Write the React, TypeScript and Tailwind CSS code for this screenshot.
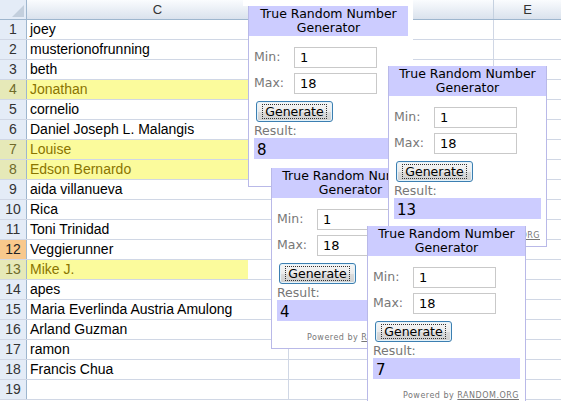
import React from 'react';

// Sheet rows: [row number, name, highlighted]
const rows: [number, string, boolean][] = [
  [1, 'joey', false],
  [2, 'musterionofrunning', false],
  [3, 'beth', false],
  [4, 'Jonathan', true],
  [5, 'cornelio', false],
  [6, 'Daniel Joseph L. Malangis', false],
  [7, 'Louise', true],
  [8, 'Edson Bernardo', true],
  [9, 'aida villanueva', false],
  [10, 'Rica', false],
  [11, 'Toni Trinidad', false],
  [12, 'Veggierunner', false],
  [13, 'Mike J.', true],
  [14, 'apes', false],
  [15, 'Maria Everlinda Austria Amulong', false],
  [16, 'Arland Guzman', false],
  [17, 'ramon', false],
  [18, 'Francis Chua', false],
  [19, '', false],
];

function Field({ label, value }: { label: string; value: string }) {
  return (
    <div className="flex items-center h-[21px]">
      <span className="w-[40px] text-[12.5px] text-[#777]">{label}</span>
      <div className="w-[83px] h-[21px] border border-[#c9c9c9] bg-white pl-[5px] text-[13px] leading-[19px] text-black">
        {value}
      </div>
    </div>
  );
}

function Widget({
  className,
  result,
  title = 'w-full',
  footer = true,
}: {
  className: string;
  result: string;
  title?: string;
  footer?: boolean;
}) {
  return (
    <div className={`absolute bg-white border-[#b9b9e8] font-['DejaVu_Sans',Verdana,sans-serif] ${className}`}>
      <div className={`h-[30px] bg-[#ccccff] pt-[1px] text-center text-[12.5px] leading-[14px] text-black ${title}`}>
        True Random Number
        <br />
        Generator
      </div>
      <div className="flex flex-col pl-[5px] pt-[11px]">
        <Field label="Min:" value="1" />
        <div className="h-[5px]" />
        <Field label="Max:" value="18" />
        <button className="mt-[7px] ml-[2px] w-[77px] h-[21px] rounded-[3px] border border-[#3c7fb1] bg-[linear-gradient(to_bottom,#f6f6f6_0%,#ebebeb_50%,#dcdcdc_51%,#cfcfcf_100%)] shadow-[inset_0_0_0_1px_#e4f3fb] flex items-center justify-center p-[2px]">
          <span className="border border-dotted border-[#333] px-[2px] text-[12.5px] leading-[13px] text-black">Generate</span>
        </button>
        <div className="h-[16px] text-[12.5px] leading-[18px] text-[#777]">Result:</div>
        <div className="w-[147px] h-[21px] bg-[#ccccff] pl-[3px] text-[15px] leading-[24px] text-black">{result}</div>
        {footer && (
          <div className="mt-[12px] pr-[6px] h-[10px] text-right text-[8px] leading-[10px] tracking-[0.5px] text-[#777]">
            Powered by <span className="underline">RANDOM.ORG</span>
          </div>
        )}
      </div>
    </div>
  );
}

export default function App() {
  return (
    <div className="relative w-[561px] h-[401px] overflow-hidden bg-white font-['Liberation_Sans',Arial,sans-serif]">
      {/* column header */}
      <div className="flex h-[20px] border-b border-[#9eb6ce] bg-[linear-gradient(to_bottom,#fafcfe,#dae2ed)]">
        <div className="relative w-[27px] border-r border-[#9eb6ce] bg-[#e4ecf7]">
          <div className="absolute right-[2px] bottom-[2px] w-0 h-0 border-l-[12px] border-l-transparent border-b-[12px] border-b-[#c3cfdd]" />
        </div>
        <div className="w-[262px] border-r border-[#c5d1e0] text-center text-[13px] leading-[19px] text-[#333]">C</div>
        <div className="w-[205px] border-r border-[#c5d1e0]" />
        <div className="flex-1 text-center text-[13px] leading-[19px] text-[#333]">E</div>
      </div>

      {/* rows */}
      {rows.map(([n, name, hl]) => (
        <div key={n} className="flex h-[20px] border-b border-[#d0d7e5]">
          <div
            className={`w-[27px] border-r border-[#9eb6ce] text-center text-[14px] leading-[19px] ${
              n === 12
                ? 'bg-[#f8c88c] text-[#222]'
                : hl
                ? 'bg-[#e6e9b8] text-[#6f6a2a]'
                : 'bg-[#e4ecf7] text-[#333]'
            }`}
          >
            {n}
          </div>
          <div
            className={`w-[262px] border-r border-[#d0d7e5] pl-[3px] text-[14px] leading-[19px] ${
              hl ? 'bg-[linear-gradient(to_right,#fbfb9c_221px,#ffffff_221px)] text-[#8a7400]' : 'text-black'
            }`}
          >
            {name}
          </div>
          <div className="w-[205px] border-r border-[#d0d7e5]" />
          <div className="flex-1" />
        </div>
      ))}

      {/* random.org widgets pasted over the sheet */}
      <div className="absolute left-[243px] top-0 w-[170px] h-[6px] bg-white" />
      <Widget className="left-[248px] top-[6px] w-[165px] h-[181px] border-l border-b" title="w-[159px]" result="8" footer={false} />
      <Widget className="left-[271px] top-[168px] w-[159px] h-[181px] border-l border-r border-b" result="4" />
      <Widget className="left-[388px] top-[66px] w-[159px] h-[181px] border-l border-r border-b" result="13" />
      <Widget className="left-[367px] top-[226px] w-[159px] h-[181px] border-l border-r border-b" result="7" />
    </div>
  );
}
